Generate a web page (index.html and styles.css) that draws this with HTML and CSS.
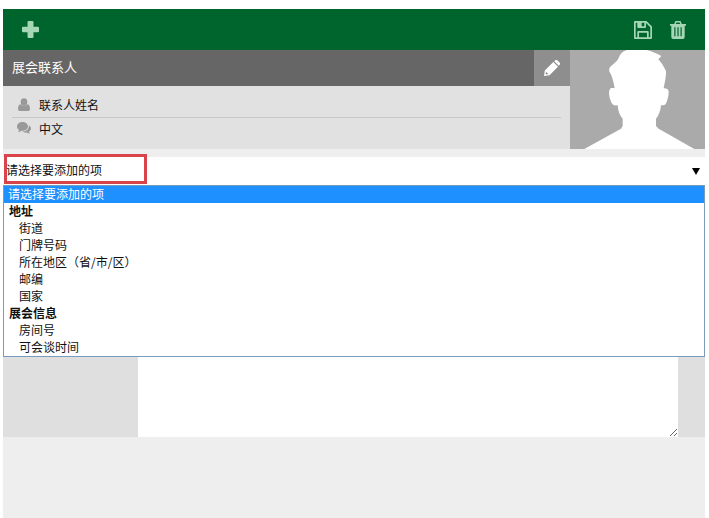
FILE: index.html
```html
<!DOCTYPE html>
<html lang="zh-CN">
<head>
    <meta charset="UTF-8" />
    <meta name="viewport" content="width=device-width, initial-scale=1.0" />
    <title>展会联系人</title>
    <link rel="stylesheet" href="styles.css">
</head>
<body>
<main class="panel">
    <header class="toolbar">
        <button type="button" aria-label="添加">
            <svg width="17" height="17" viewBox="0 0 16 16"><path d="M6.200 0h3.600a1 1 0 0 1 1 1v4.400H15a1 1 0 0 1 1 1v3.200a1 1 0 0 1-1 1h-4.200V15a1 1 0 0 1-1 1H6.200a1 1 0 0 1-1-1v-4.400H1a1 1 0 0 1-1-1V6.400a1 1 0 0 1 1-1h4.200V1a1 1 0 0 1 1-1z"/></svg>
        </button>
        <div class="toolbar-right">
            <button type="button" aria-label="保存">
                <svg width="18" height="18" viewBox="0 0 18 18"><path fill-rule="evenodd" d="M1 0h11.500L18 5.500V17a1 1 0 0 1-1 1H1a1 1 0 0 1-1-1V1a1 1 0 0 1 1-1zM1.700 1.700v14.600h1.600V11a1 1 0 0 1 1-1h9.400a1 1 0 0 1 1 1v5.300h1.600V6.300L12 2v4a1 1 0 0 1-1 1H4.300a1 1 0 0 1-1-1V1.700zM7.700 1.700v3.600h2.600V1.700zM5 11.700v4.600h8v-4.600z"/></svg>
            </button>
            <button type="button" aria-label="删除">
                <svg width="16" height="18" viewBox="0 0 16 18"><path fill-rule="evenodd" d="M5.500 0h5l1.300 3H16v1.700h-1.300V16a2 2 0 0 1-2 2H3.300a2 2 0 0 1-2-2V4.700H0V3h4.200zM6.400 1.500L5.800 3h4.400l-.6-1.500zM4.300 6.300v9h1.200v-9zM7.400 6.300v9h1.200v-9zM10.500 6.300v9h1.200v-9z"/></svg>
            </button>
        </div>
    </header>

    <section class="contact">
        <div class="contact-info">
            <div class="contact-title">
                <h1>展会联系人</h1>
                <button type="button" class="edit" aria-label="编辑">
                    <svg width="16" height="16" viewBox="0 0 16 16"><path fill-rule="evenodd" d="M0 16l.8-5.500L9.300 2l4.700 4.700-8.500 8.500zM1.900 12.200l-.4 1.300 1.100 1.100 1.400-.4v-1H2.900v-1zM10.200 1.200L11.400.2a1.300 1.300 0 0 1 1.900 0l2.500 2.500a1.300 1.300 0 0 1 0 1.900l-1 1.200z"/></svg>
                </button>
            </div>
            <ul class="details">
                <li>
                    <svg width="14" height="14" viewBox="0 0 14 14"><ellipse cx="7" cy="4" rx="3.300" ry="3.700"/><path d="M3.600 6.300C1.500 6.600 1 9 1 11.300 1 12.300 1.800 13 2.800 13h8.400c1 0 1.800-.7 1.800-1.700 0-2.300-.5-4.700-2.600-5C9.400 7.500 8.200 7.700 7 7.700S4.600 7.500 3.600 6.300z"/></svg>
                    <span>联系人姓名</span>
                </li>
                <li>
                    <svg width="14" height="14" viewBox="0 0 14 14"><path d="M5.500 1C8.500 1 11 3 11 5.500S8.500 9.800 5.500 9.800L4.300 9.700C3.400 10.500 2.200 11 1 11c.6-.6 1-1.200 1.100-2C.8 8.200 0 7 0 5.500 0 3 2.500 1 5.500 1zM12 4.300c1.200.8 2 1.900 2 3.200s-.8 2.400-2 3.200c.1.800.5 1.500 1.100 2.100-1.200 0-2.400-.5-3.300-1.200-1.800.2-3.500-.2-4.700-1C9 10.700 12.100 8.500 12 4.300z"/></svg>
                    <span>中文</span>
                </li>
            </ul>
        </div>
        <svg class="avatar" viewBox="150 150 405 297" role="img" aria-label="头像">
            <path d="M193 447L303 386l5-8v-22c-8-8-14-22-15-40-12 2-18-4-21-14-6-14-7-34 1-38h11c-3-15-6-28-10-38l-6-12c-2-9 2-13 8-18 8-7 17-14 20-22 5-15 16-24 34-26 34-6 62 3 94 20l-9 10c8 8 15 19 23 35 1 16-4 34-7 52 9 0 15 2 15 12 0 10-3 22-7 31-3 7-8 8-16 8-1 17-7 30-15 40v22l8 8 107 61z"/>
        </svg>
    </section>

    <div class="picker">
        <select id="item" aria-label="请选择要添加的项">
            <option>请选择要添加的项</option>
        </select>
        <span class="marker"></span>
        <ul class="options" role="listbox" aria-label="请选择要添加的项">
            <li class="selected" role="option" aria-selected="true">请选择要添加的项</li>
            <li class="group">地址</li>
            <li role="option">街道</li>
            <li role="option">门牌号码</li>
            <li role="option">所在地区<span class="paren" lang="zh-TW">（</span>省/市/区<span class="paren" lang="zh-TW">）</span></li>
            <li role="option">邮编</li>
            <li role="option">国家</li>
            <li class="group">展会信息</li>
            <li role="option">房间号</li>
            <li role="option">可会谈时间</li>
        </ul>
    </div>

    <div class="note">
        <textarea aria-label="备注" rows="14"></textarea>
    </div>
</main>
</body>
</html>
```
FILE: styles.css
```css
* {
    box-sizing: border-box;
}
body {
    margin: 0;
    padding: 9px 4px 0 3px;
    min-height: 100vh;
    display: flex;
    background-color: #fff;
    color: #111;
    font-family: "Noto Sans CJK SC", sans-serif;
    font-size: 12px;
}
ul {
    margin: 0;
    padding: 0;
    list-style: none;
}
svg {
    display: block;
}
button {
    display: flex;
    align-items: center;
    justify-content: center;
    padding: 0;
    border: none;
    background: none;
    cursor: pointer;
}
.panel {
    flex: 1;
    min-width: 0;
    background-color: #eee;
}
.toolbar {
    display: flex;
    align-items: center;
    justify-content: space-between;
    height: 41px;
    padding: 0 19px;
    background-color: #00642d;
}
.toolbar svg {
    fill: #a5d6b5;
}
.toolbar-right {
    display: flex;
    gap: 18px;
}

/* contact card */
.contact {
    display: flex;
    background-color: #e1e1e1;
}
.contact-info {
    flex: 1;
}
.contact-title {
    display: flex;
    height: 36px;
    background-color: #666;
}
.contact-title h1 {
    flex: 1;
    margin: 0;
    padding-left: 9px;
    color: #fff;
    font-size: 13px;
    font-weight: normal;
    line-height: 34px;
}
.edit {
    width: 36px;
    background-color: #8e8e8e;
}
.edit svg {
    fill: #fff;
}
.details {
    padding: 8px 9px 0;
}
.details li {
    display: flex;
    align-items: center;
    gap: 8px;
    height: 20px;
    padding-left: 5px;
}
.details li:first-child {
    height: 24px;
    padding-bottom: 2px;
    border-bottom: 1px solid #c8c8c8;
}
.details svg {
    fill: #999;
}
.avatar {
    width: 135px;
    height: 99px;
    background-color: #aaa;
    fill: #fff;
}

/* dropdown */
.picker {
    position: relative;
    margin-top: 8px;
    background-color: #fff;
}
.picker select {
    display: block;
    width: 100%;
    height: 28px;
    padding: 0 3px 3px;
    border: none;
    background: none;
    color: #111;
    font: inherit;
    appearance: none;
}
.picker::after {
    content: "";
    position: absolute;
    top: 11px;
    right: 5px;
    border: 4px solid transparent;
    border-top: 7px solid #000;
    border-bottom: none;
    pointer-events: none;
}
.marker {
    position: absolute;
    top: -3px;
    left: 1px;
    width: 143px;
    height: 30px;
    border: 3px solid #d9434a;
    pointer-events: none;
}
.options {
    position: absolute;
    top: 100%;
    left: 0;
    right: 0;
    border: 1px solid #7a9bbd;
    background-color: #fff;
    line-height: 15px;
}
.options li {
    padding: 0 0 2px 15px;
}
.options .group {
    padding-left: 5px;
    font-weight: bold;
}
.options .selected {
    padding-left: 4px;
    background-color: #1e90ff;
    color: #fff;
}
.paren {
    font-family: "Noto Sans CJK TC", sans-serif;
}

.note {
    padding: 0 27px 0 135px;
    background-color: #dfdfdf;
}
.note textarea {
    display: block;
    width: 100%;
    padding: 0;
    border: none;
    background-color: #fff;
    font: inherit;
    line-height: 18px;
    resize: both;
}
```
